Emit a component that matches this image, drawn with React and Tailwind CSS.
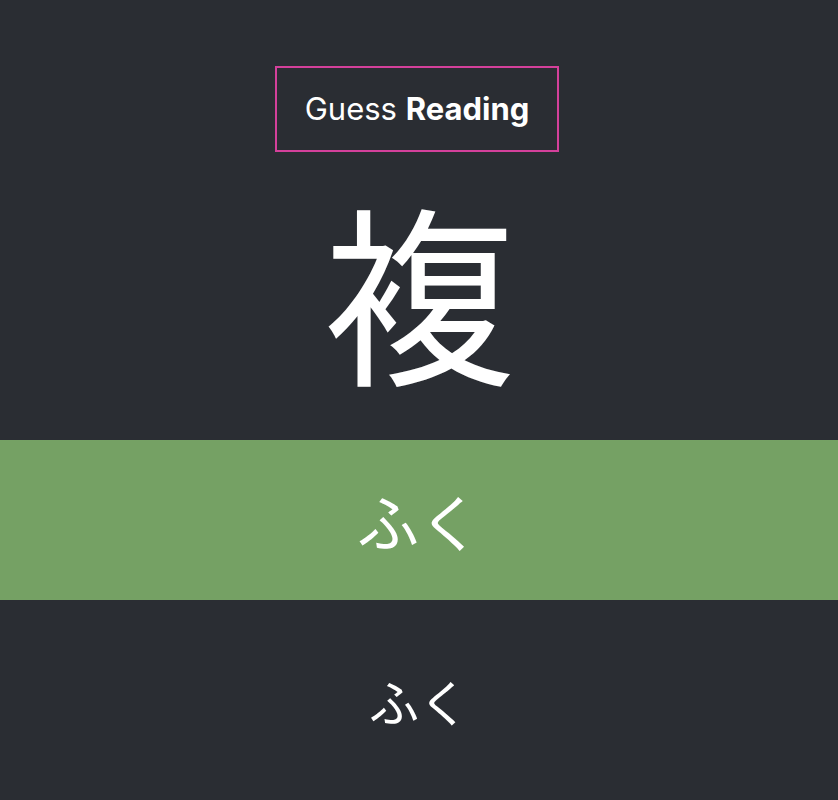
export default function App() {
  return (
    <div className="w-[838px] h-[800px] bg-[#2a2d33] text-white flex flex-col items-center overflow-hidden font-['Inter','Noto_Sans_CJK_JP',sans-serif]">
      <div className="mt-[66px] mr-[4px] w-[284px] h-[86px] border-2 border-[#d4409b] flex items-center justify-center text-[31px]">
        <span>Guess&nbsp;</span><span className="font-bold">Reading</span>
      </div>
      <div className="h-[288px] pb-[18px] flex items-center justify-center text-[192px] leading-none font-['Noto_Sans_CJK_JP',sans-serif]">
        複
      </div>
      <div className="w-full h-[160px] bg-[#75a164] flex items-center justify-center text-[62px] font-['Noto_Sans_CJK_JP',sans-serif]">
        ふく
      </div>
      <div className="h-[200px] flex items-center justify-center text-[50px] font-['Noto_Sans_CJK_JP',sans-serif]">
        ふく
      </div>
    </div>
  );
}
